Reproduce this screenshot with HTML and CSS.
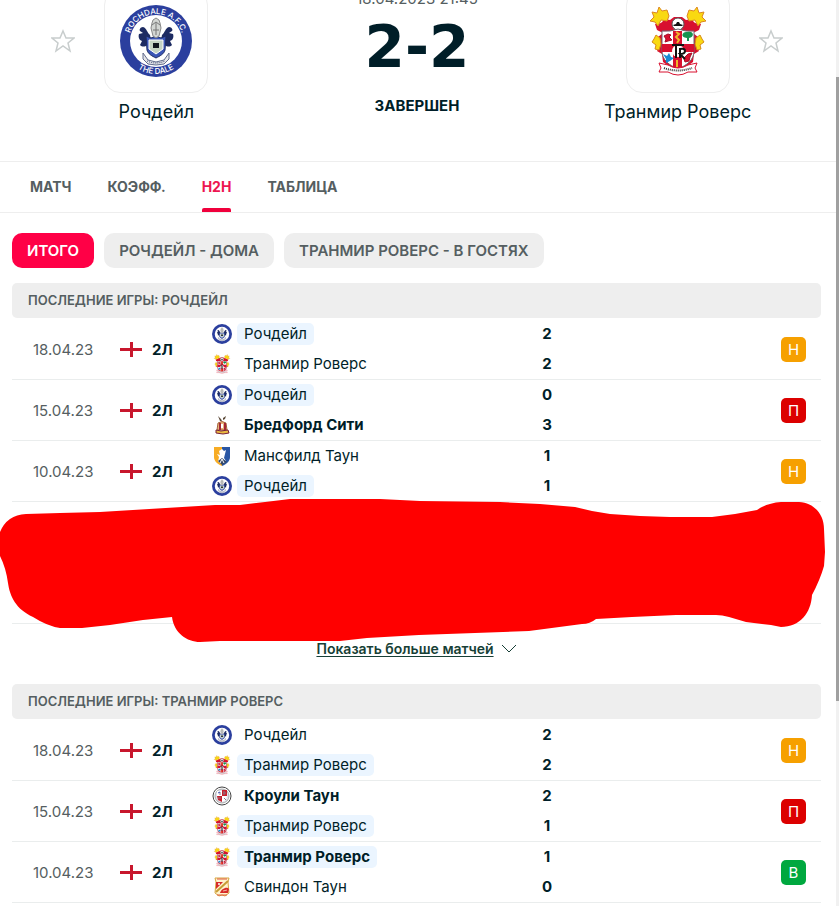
FILE: index.html
```html
<!DOCTYPE html>
<html lang="ru">
<head>
  <meta charset="UTF-8">
  <meta name="viewport" content="width=device-width, initial-scale=1.0">
  <title>Рочдейл - Транмир Роверс</title>
  <link rel="stylesheet" href="styles.css">
</head>
<body>
  <!-- Club logos and small icons -->
  <svg class="sprite" width="0" height="0" aria-hidden="true">
    <defs>
      <path id="arc-top" d="M9 36a27 27 0 0 1 54 0" />
      <path id="arc-bottom" d="M3 36a33 33 0 0 0 66 0" />
    </defs>
    <symbol id="rochdale" viewBox="0 0 72 72">
      <circle cx="36" cy="36" r="36" fill="#2b3f9e" />
      <circle cx="36" cy="36" r="26" fill="#fff" />
      <path d="M30 30c-3-2-3-7-7-8-3 0-4 3-3 4l3 2-4 1c-1 3 0 6 3 7l-2 4c2 2 5 2 7 0l1 6h5zM42 30c3-2 3-7 7-8 3 0 4 3 3 4l-3 2 4 1c1 3 0 6-3 7l2 4c-2 2-5 2-7 0l-1 6h-5z" fill="#1d2b62" />
      <path d="M26 31l5 2 5-2 5 2 5-2-1 14c-1 4-5 6-9 8-4-2-8-4-9-8z" fill="#3a55b5" stroke="#1d2b62" />
      <path d="M29 35h14v9l-7 5-7-5z" fill="#c5d4c4" stroke="#fff" />
      <path d="M33 38h6v5h-6z" fill="#10151e" />
      <path d="M33 31l-2-8 1-5 1-3 3-2 3 2 1 3 1 5-2 8-3 2z" fill="#d3d6d3" stroke="#888" />
      <path d="M32 20l4-3 4 3M33 25h6M36 18v12" fill="none" stroke="#777" />
      <path d="M23 48l5 7 8 2 8-2 5-7 0 6-5 5-8 1-8-1-5-5z" fill="#e4e5e8" stroke="#626c8d" />
      <path d="M27 56q9 4 18 0" fill="none" stroke="#34406f" stroke-dasharray="1 1" />
    </symbol>
    <symbol id="tranmere" viewBox="0 0 72 72">
      <path d="M28 15c-4-1-7 0-9 3l-6 1 2 6 6 3-5 4-1 5 3 3-3 6 5 3 1 8 7 5h16l7-5 1-8 5-3-3-6 3-3-1-5-5-4 6-3 2-6-6-1c-2-3-5-4-9-3l-4-3h-8z" fill="#d8102f" />
      <path d="M17 2l3 4 5-1 2 6-2 5-6-1-3 6-3-4-5-1 4-4-2-5 5 1zM55 2l-3 4-5-1-2 6 2 5 6-1 3 6 3-4 5-1-4-4 2-5-5 1z" fill="#f9d911" stroke="#dd8820" stroke-width="1" />
      <path d="M14 30l4 3 1 6-2 6-4-1 1-4-4-3 2-3zM58 30l-4 3-1 6 2 6 4-1-1-4 4-3-2-3z" fill="#f9d911" stroke="#d78b16" stroke-width="1" />
      <circle cx="36" cy="19" r="6" fill="#fff" stroke="#555" />
      <path d="M31 20l3-1 1-2h2l1 2 3 1-1 1h-8z" fill="#111" />
      <path d="M20 26q8 1 16-2 8 3 16 2v20c0 9-7 14-16 18-9-4-16-9-16-18z" fill="#fff" stroke="#6e6770" />
      <path d="M31 26h9v36l-4 2-5-2zM20 39h32v8H20z" fill="#d8102f" />
      <path d="M34 27l3 2-3 3 3 3-2 3M35 55v7" fill="none" stroke="#efb52a" stroke-width="2" />
      <path d="M22 31l4-2 3 1-2 2 3 3-4 1-3 1 1-3zM43 52l3-3 4-1-2 4-1 4-4 1-1-3z" fill="#d8102f" stroke="#a30e26" />
      <path d="M45 36v-3c-8-1-4-7 0-6 7-2 8 5 2 6v3z" fill="#169451" />
      <path d="M21 49l4 2 2-3 2 4 3 1-4 3-4 2 0-4z" fill="#178bd4" />
      <circle cx="36" cy="46" r="6" fill="#fff" />
      <path d="M30 40h12M34 40v13M38 43v10" stroke="#111" stroke-width="2" />
      <path d="M17 58l9 2q10 6 20 0l9-2-2 5 2 4-9 0q-10 6-20 0l-9 0 2-4z" fill="#fff" stroke="#d8102f" />
      <path d="M22 63q14 5 28 0" fill="none" stroke="#333" stroke-width="2" stroke-dasharray="1 1" />
    </symbol>
    <symbol id="bradford" viewBox="0 0 20 20">
      <path d="M6 1l3 3 1 2H8zM11 3l3-2-1 3-2 1z" fill="#5b4938" />
      <path d="M6 8q4-3 8 0l1 7H5z" fill="#e8b37c" stroke="#a4623a" />
      <path d="M7 8h2v7H7zM12 8h2v7h-2z" fill="#a32735" />
      <path d="M9 9h2v4H9z" fill="#fff" />
      <path d="M4 15l5 1 7-1 1 3-6 1-7-1z" fill="#e9ba42" stroke="#792038" />
    </symbol>
    <symbol id="mansfield" viewBox="0 0 20 20">
      <path d="M2 1h8v19c-5-2-8-5-8-9z" fill="#f7ac24" />
      <path d="M10 1h8v10c0 4-3 7-8 9z" fill="#2956a4" />
      <path d="M7 5l3-2 2 2 2-1-1 4-1 4 2 3-4-1-4 2 1-5-2-3 3 1z" fill="#fff" />
      <path d="M6 15l4-3 5 4-5 3z" fill="#344869" />
      <path d="M8 17l2-4 2 4" fill="none" stroke="#fff" />
    </symbol>
    <symbol id="crawley" viewBox="0 0 20 20">
      <circle cx="10" cy="10" r="9" fill="#fff" stroke="#444" />
      <circle cx="10" cy="10" r="7" fill="#dfe1eb" stroke="#aaa" />
      <path d="M10 4h5v6h-5zM5 10h5v6l-4-2z" fill="#c9202d" />
      <path d="M5 5h5v5H5zM10 10h5l-1 4-4 2z" fill="#fff" />
      <path d="M12 5v4M11 7h3M6 12h3M8 6v3M12 12l2 2" stroke="#8c7783" />
      <path d="M6 7l2-1" stroke="#384eb1" />
    </symbol>
    <symbol id="swindon" viewBox="0 0 20 20">
      <path d="M3 1h14l-1 4 1 11-4 3-3-1-3 1-4-3 1-11z" fill="#fff3cc" stroke="#d6a541" />
      <path d="M4 5h7L4 12zM8 16c1-4 7-7 9-4l-1 4z" fill="#d72b29" />
      <path d="M4 15L16 4" stroke="#c79c34" stroke-width="2" />
      <path d="M5 2h10M5 18h10" stroke="#e05a40" />
      <circle cx="7" cy="7" r="1" fill="#fff" />
      <path d="M11 14l4-1" stroke="#f6b3a2" />
    </symbol>
    <symbol id="england" viewBox="0 0 22 15">
      <path d="M0 0h22v15H0z" fill="#fff" />
      <path d="M10 0h3v15h-3zM0 6h22v3H0z" fill="#c8172d" />
    </symbol>
    <symbol id="star" viewBox="0 0 24 24">
      <path d="M12 2l3 7h8l-6 5 2 8-7-5-7 5 2-8-6-5h8z" fill="none" stroke="#c8cdcd" stroke-width="1.500" />
    </symbol>
  </svg>

  <main class="page">
    <header class="match">
      <div class="team">
        <button class="favorite" type="button" aria-label="В избранное"><svg><use href="#star" /></svg></button>
        <div class="team-card">
          <svg viewBox="0 0 72 72">
            <use href="#rochdale" />
            <g class="crest-text">
              <text><textPath href="#arc-top" startOffset="50%" text-anchor="middle">ROCHDALE A.F.C.</textPath></text>
              <text><textPath href="#arc-bottom" startOffset="50%" text-anchor="middle">THE DALE</textPath></text>
            </g>
          </svg>
        </div>
        <div class="team-name">Рочдейл</div>
      </div>
      <div class="result">
        <div class="start-time">18.04.2023 21:45</div>
        <div class="score">2-2</div>
        <div class="status">ЗАВЕРШЕН</div>
      </div>
      <div class="team team-away">
        <button class="favorite" type="button" aria-label="В избранное"><svg><use href="#star" /></svg></button>
        <div class="team-card">
          <svg viewBox="0 0 72 72">
            <use href="#tranmere" />
            <path d="M38 44q5-1 5 2 0 3-5 3l5 5" fill="none" stroke="#111" stroke-width="2" />
          </svg>
        </div>
        <div class="team-name">Транмир Роверс</div>
      </div>
    </header>

    <nav class="tabs">
      <a href="#match">МАТЧ</a>
      <a href="#odds">КОЭФФ.</a>
      <a href="#h2h" class="active">H2H</a>
      <a href="#table">ТАБЛИЦА</a>
    </nav>

    <div class="content">
      <div class="filters">
        <button class="filter active" type="button">ИТОГО</button>
        <button class="filter" type="button">РОЧДЕЙЛ - ДОМА</button>
        <button class="filter" type="button">ТРАНМИР РОВЕРС - В ГОСТЯХ</button>
      </div>

      <section>
        <h2>ПОСЛЕДНИЕ ИГРЫ: РОЧДЕЙЛ</h2>
        <table class="games">
          <tr>
            <td class="date">18.04.23</td>
            <td class="league"><div><svg><use href="#england" /></svg>2Л</div></td>
            <td class="teams">
              <div><svg><use href="#rochdale" /></svg><span class="current">Рочдейл</span></div>
              <div><svg><use href="#tranmere" /></svg><span>Транмир Роверс</span></div>
            </td>
            <td class="goals"><div>2</div><div>2</div></td>
            <td class="outcome"><span class="badge draw">Н</span></td>
          </tr>
          <tr>
            <td class="date">15.04.23</td>
            <td class="league"><div><svg><use href="#england" /></svg>2Л</div></td>
            <td class="teams">
              <div><svg><use href="#rochdale" /></svg><span class="current">Рочдейл</span></div>
              <div><svg><use href="#bradford" /></svg><span class="winner">Бредфорд Сити</span></div>
            </td>
            <td class="goals"><div>0</div><div>3</div></td>
            <td class="outcome"><span class="badge loss">П</span></td>
          </tr>
          <tr>
            <td class="date">10.04.23</td>
            <td class="league"><div><svg><use href="#england" /></svg>2Л</div></td>
            <td class="teams">
              <div><svg><use href="#mansfield" /></svg><span>Мансфилд Таун</span></div>
              <div><svg><use href="#rochdale" /></svg><span class="current">Рочдейл</span></div>
            </td>
            <td class="goals"><div>1</div><div>1</div></td>
            <td class="outcome"><span class="badge draw">Н</span></td>
          </tr>
        </table>
        <div class="redacted">
          <svg viewBox="0 0 833 150" preserveAspectRatio="none" aria-hidden="true">
            <path d="M0 36Q7 19 26 18L60 17 100 16 215 9 240 9 265 6 290 3H380L420 5 500 6 540 8 575 11 592 15 610 18 640 20 670 21H712L735 18 757 14Q767 7 781 6H799C815 7 824 19 824 33L825 56 824 70Q820 84 812 99C811 117 800 131 781 131L771 129 746 126 729 121Q722 119 716 119H676L632 121 596 123Q590 128 582 128L529 135 419 139 367 142 340 145 220 145 200 146C187 146 174 137 172 121L143 124 110 129 82 132H60Q47 130 33 121C16 113 10 101 8 87Q6 72 0 60Z" fill="#f00" />
          </svg>
        </div>
        <div class="more">
          <a href="#more">Показать больше матчей</a>
          <svg viewBox="0 0 16 10"><path d="M1 1l7 7 7-7" fill="none" stroke="#173f36" /></svg>
        </div>
      </section>

      <section>
        <h2>ПОСЛЕДНИЕ ИГРЫ: ТРАНМИР РОВЕРС</h2>
        <table class="games">
          <tr>
            <td class="date">18.04.23</td>
            <td class="league"><div><svg><use href="#england" /></svg>2Л</div></td>
            <td class="teams">
              <div><svg><use href="#rochdale" /></svg><span>Рочдейл</span></div>
              <div><svg><use href="#tranmere" /></svg><span class="current">Транмир Роверс</span></div>
            </td>
            <td class="goals"><div>2</div><div>2</div></td>
            <td class="outcome"><span class="badge draw">Н</span></td>
          </tr>
          <tr>
            <td class="date">15.04.23</td>
            <td class="league"><div><svg><use href="#england" /></svg>2Л</div></td>
            <td class="teams">
              <div><svg><use href="#crawley" /></svg><span class="winner">Кроули Таун</span></div>
              <div><svg><use href="#tranmere" /></svg><span class="current">Транмир Роверс</span></div>
            </td>
            <td class="goals"><div>2</div><div>1</div></td>
            <td class="outcome"><span class="badge loss">П</span></td>
          </tr>
          <tr>
            <td class="date">10.04.23</td>
            <td class="league"><div><svg><use href="#england" /></svg>2Л</div></td>
            <td class="teams">
              <div><svg><use href="#tranmere" /></svg><span class="current winner">Транмир Роверс</span></div>
              <div><svg><use href="#swindon" /></svg><span>Свиндон Таун</span></div>
            </td>
            <td class="goals"><div>1</div><div>0</div></td>
            <td class="outcome"><span class="badge win">В</span></td>
          </tr>
        </table>
      </section>
    </div>
  </main>
  <div class="scrollbar" aria-hidden="true"><div class="scroll-thumb"></div></div>
</body>
</html>
```
FILE: styles.css
```css
* {
  box-sizing: border-box;
}
body {
  margin: 0;
  height: 100vh;
  overflow: hidden;
  background-color: #fff;
  color: #001e28;
  font-family: Inter, Roboto, sans-serif;
  font-size: 15px;
}
button {
  border: 0;
  padding: 0;
  background: none;
  font-family: inherit;
  cursor: pointer;
}
svg {
  display: block;
  flex-shrink: 0;
}
.sprite {
  position: absolute;
}
.crest-text {
  fill: #fff;
  font: 500 8px Inter, sans-serif;
}
/* The view starts a little way down the page */
.page {
  margin-top: -11px;
}
.match {
  display: grid;
  grid-template-columns: 3fr 2fr 3fr;
  padding: 0 5px 37px 0;
}
.team {
  display: grid;
  grid-template-columns: 24px 104px 24px;
  grid-template-rows: 104px 24px;
  column-gap: 29px;
  row-gap: 7px;
  justify-content: center;
  align-items: center;
}
.favorite {
  grid-column: 1;
  grid-row: 1;
}
.team-away .favorite {
  grid-column: 3;
}
.favorite svg {
  width: 24px;
  height: 24px;
}
.team-card {
  grid-column: 2;
  grid-row: 1;
  height: 104px;
  display: flex;
  align-items: center;
  justify-content: center;
  border: 1px solid #eee;
  border-radius: 16px;
}
.team-card svg {
  width: 72px;
  height: 72px;
}
.team-name {
  grid-column: 1 / 4;
  grid-row: 2;
  text-align: center;
  font-size: 18px;
  line-height: 24px;
}
.result {
  text-align: center;
}
.start-time {
  font-size: 15px;
  line-height: 20px;
  color: #555e61;
}
.score {
  margin-top: 5px;
  font-family: "DejaVu Sans", sans-serif;
  font-size: 58px;
  font-weight: 700;
  line-height: 66px;
}
.status {
  margin-top: 16px;
  font-size: 15px;
  font-weight: 700;
  line-height: 20px;
}
.tabs {
  display: flex;
  gap: 36px;
  padding: 0 30px;
  border-top: 1px solid #eee;
  border-bottom: 1px solid #eee;
}
.tabs a {
  padding: 4px 0;
  color: #555e61;
  font-size: 14px;
  font-weight: 700;
  line-height: 42px;
  text-decoration: none;
}
.tabs .active {
  position: relative;
  color: #ed1651;
}
.tabs .active::after {
  content: "";
  position: absolute;
  left: 0;
  right: 0;
  bottom: 0;
  height: 4px;
  border-radius: 2px 2px 0 0;
  background-color: #f0003c;
}
.content {
  padding: 20px 18px 0 12px;
}
.filters {
  display: flex;
  gap: 10px;
  margin-bottom: 15px;
}
.filter {
  height: 35px;
  padding: 0 15px;
  border-radius: 10px;
  background-color: #eee;
  color: #555e61;
  font-size: 15px;
  font-weight: 600;
}
.filter.active {
  background-color: #ff0046;
  color: #fff;
}
h2 {
  margin: 0;
  padding: 0 16px;
  border-radius: 5px;
  background-color: #eee;
  color: #555e61;
  font-size: 13px;
  font-weight: 600;
  line-height: 35px;
}
.games {
  width: 100%;
  margin-top: 1px;
  border-collapse: separate;
  border-spacing: 0;
  table-layout: fixed;
}
.games td {
  padding: 0;
  border-bottom: 1px solid #eaeded;
}
.games .date {
  width: 108px;
  padding-left: 21px;
  color: #555e61;
}
.league {
  width: 92px;
  font-weight: 700;
}
.league div {
  display: flex;
  align-items: center;
  gap: 10px;
}
.league svg {
  width: 22px;
  height: 15px;
}
.teams {
  width: 320px;
}
.teams div {
  display: flex;
  align-items: center;
  gap: 5px;
  height: 30px;
}
.teams svg {
  width: 20px;
  height: 20px;
}
.teams span {
  padding: 0 7px;
  border-radius: 5px;
  line-height: 22px;
}
.teams .current {
  background-color: #ebf5ff;
}
.winner {
  font-weight: 700;
}
.goals {
  width: 30px;
  text-align: center;
  font-weight: 700;
  line-height: 30px;
}
.games .outcome {
  padding-right: 15px;
}
.badge {
  display: block;
  width: 25px;
  margin-left: auto;
  border-radius: 5px;
  color: #fff;
  text-align: center;
  line-height: 25px;
}
.draw {
  background-color: #f6a000;
}
.loss {
  background-color: #dc0000;
}
.win {
  background-color: #00a83f;
}
/* Two rows painted over */
.redacted {
  position: relative;
  height: 122px;
  border-bottom: 1px solid #eaeded;
}
.redacted svg {
  position: absolute;
  top: -6px;
  left: -12px;
  width: calc(100% + 24px);
  height: 150px;
}
.more {
  display: flex;
  align-items: center;
  justify-content: center;
  gap: 7px;
  padding: 16px 0 26px;
  line-height: 18px;
}
.more a {
  /* keeps the link above the painted area */
  position: relative;
  color: #173f36;
  font-size: 14px;
  font-weight: 600;
  text-underline-offset: 2px;
}
.more svg {
  width: 16px;
  height: 10px;
}
.scrollbar {
  position: fixed;
  top: 0;
  right: 0;
  bottom: 0;
  width: 3px;
  padding-top: 77px;
  background-color: #f1f1f1;
}
.scroll-thumb {
  height: 624px;
  background-color: #a0a0a0;
}
```
